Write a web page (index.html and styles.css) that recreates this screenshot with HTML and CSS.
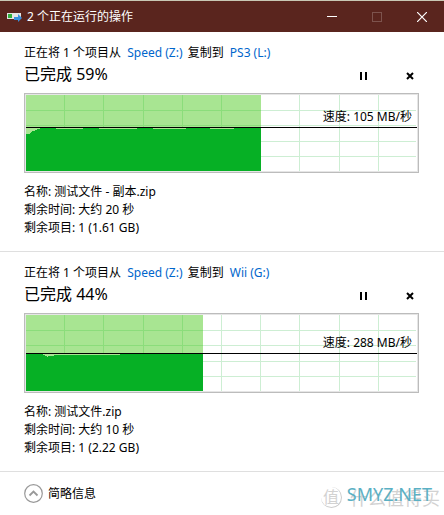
FILE: index.html
```html
<!DOCTYPE html>
<html lang="zh-CN">

<head>
    <meta charset="UTF-8">
    <meta name="viewport" content="width=device-width, initial-scale=1">
    <title>2 个正在运行的操作</title>
    <link rel="stylesheet" href="styles.css">
</head>

<body>
    <header class="titlebar">
        <svg class="app-icon" width="16" height="10" viewBox="0 0 16 10">
            <rect x="0" y="1" width="14" height="6" fill="#e4e4e4" />
            <rect x="1" y="2" width="4" height="4" fill="#2fae3c" />
            <path d="M7 5h4V2l4 4-4 4V8H7z" fill="#3990dd" />
        </svg>
        <h1 class="window-title">2 个正在运行的操作</h1>
        <button class="window-button" type="button" aria-label="最小化">
            <svg width="10" height="10" viewBox="0 0 10 10"><path d="M0 4.500h10" stroke="#fff" /></svg>
        </button>
        <button class="window-button" type="button" aria-label="最大化" disabled>
            <svg width="10" height="10" viewBox="0 0 10 10"><rect x=".5" y=".5" width="9" height="9" fill="none" stroke="#7d534d" /></svg>
        </button>
        <button class="window-button" type="button" aria-label="关闭">
            <svg width="10" height="10" viewBox="0 0 10 10"><path d="M0 0l10 10M10 0L0 10" stroke="#fff" stroke-width="1.200" /></svg>
        </button>
    </header>

    <main>
        <section class="operation">
            <p class="route">正在将 1 个项目从 <a href="#">Speed (Z:)</a> 复制到 <a href="#">PS3 (L:)</a></p>
            <div class="status">
                <h2>已完成 59%</h2>
                <button class="action" type="button" aria-label="暂停">
                    <svg width="8" height="8" viewBox="0 0 8 8"><path d="M0 0h2v8H0zM5 0h2v8H5z" /></svg>
                </button>
                <button class="action" type="button" aria-label="取消">
                    <svg width="8" height="8" viewBox="0 0 8 8"><path d="M1 1l6 6M7 1L1 7" stroke="#000" stroke-width="2" /></svg>
                </button>
            </div>
            <div class="chart">
                <svg class="graph" viewBox="0 0 391 76" preserveAspectRatio="none">
                    <path class="grid" d="M38 0h1v76h-1zM77 0h1v76h-1zM117 0h1v76h-1zM156 0h1v76h-1zM195 0h1v76h-1zM234 0h1v76h-1zM273 0h1v76h-1zM313 0h1v76h-1zM352 0h1v76h-1zM0 15h390v1H0zM0 30h390v1H0zM0 46h390v1H0zM0 61h390v1H0z" />
                    <path class="done" d="M0 0h235v76H0z" />
                    <path class="done-grid" d="M38 0h1v33h-1zM77 0h1v33h-1zM117 0h1v33h-1zM156 0h1v33h-1zM195 0h1v33h-1zM0 15h235v1H0zM0 30h235v1H0z" />
                    <path class="rate" d="M0 39h4v-1h1v-1h1v-1h3v-1h2v-1h3v-1h16v1h27v-1h16v1h38v-1h16v1h33v-1h24v1h24v-1h27v43H0z" />
                    <path class="speed-line" d="M0 32h391v1H0z" />
                </svg>
                <span class="speed speed-upper">速度: 105 MB/秒</span>
            </div>
            <div class="details">
                <p>名称: 测试文件 - 副本.zip</p>
                <p>剩余时间: 大约 20 秒</p>
                <p>剩余项目: 1 (1.61 GB)</p>
            </div>
        </section>

        <section class="operation">
            <p class="route">正在将 1 个项目从 <a href="#">Speed (Z:)</a> 复制到 <a href="#">Wii (G:)</a></p>
            <div class="status">
                <h2>已完成 44%</h2>
                <button class="action" type="button" aria-label="暂停">
                    <svg width="8" height="8" viewBox="0 0 8 8"><path d="M0 0h2v8H0zM5 0h2v8H5z" /></svg>
                </button>
                <button class="action" type="button" aria-label="取消">
                    <svg width="8" height="8" viewBox="0 0 8 8"><path d="M1 1l6 6M7 1L1 7" stroke="#000" stroke-width="2" /></svg>
                </button>
            </div>
            <div class="chart">
                <svg class="graph" viewBox="0 0 391 76" preserveAspectRatio="none">
                    <path class="grid" d="M38 0h1v76h-1zM77 0h1v76h-1zM117 0h1v76h-1zM156 0h1v76h-1zM195 0h1v76h-1zM234 0h1v76h-1zM273 0h1v76h-1zM313 0h1v76h-1zM352 0h1v76h-1zM0 15h390v1H0zM0 30h390v1H0zM0 46h390v1H0zM0 61h390v1H0z" />
                    <path class="done" d="M0 0h177v76H0z" />
                    <path class="done-grid" d="M38 0h1v39h-1zM77 0h1v39h-1zM117 0h1v39h-1zM156 0h1v39h-1zM0 15h177v1H0zM0 30h177v1H0z" />
                    <path class="rate" d="M0 39h17v1h2v1h2v1h1v-1h6v-1h66v-1h83v37H0z" />
                    <path class="speed-line" d="M0 38h391v1H0z" />
                </svg>
                <span class="speed speed-lower">速度: 288 MB/秒</span>
            </div>
            <div class="details">
                <p>名称: 测试文件.zip</p>
                <p>剩余时间: 大约 10 秒</p>
                <p>剩余项目: 1 (2.22 GB)</p>
            </div>
        </section>
    </main>

    <footer class="footer">
        <button class="toggle" type="button">
            <svg width="19" height="19" viewBox="0 0 19 19" fill="none">
                <circle cx="9.500" cy="9.500" r="8.800" stroke="#999" stroke-width="1.200" />
                <path d="M5.500 11.500l4-4 4 4" stroke="#999" stroke-width="1.800" />
            </svg>
            <span>简略信息</span>
        </button>
        <div class="watermark">
            <span class="watermark-logo">值</span>
            <span class="watermark-name">什么值得买</span>
            <span class="watermark-site">SMYZ.NET</span>
        </div>
    </footer>
</body>

</html>
```

FILE: styles.css
```css
body {
    margin: 0;
    background: #fff;
    color: #000;
    font-family: "Noto Sans", "Noto Sans CJK SC", sans-serif;
    font-size: 12px;
    line-height: 18px;
}

p,
h1,
h2 {
    margin: 0;
    font-weight: normal;
}

button {
    border: 0;
    padding: 0;
    background: none;
    color: inherit;
    font: inherit;
}

a {
    margin: 0 2px 0 3px;
    color: #0066cc;
    text-decoration: none;
}

svg {
    display: block;
}

/* Title bar */
.titlebar {
    display: flex;
    align-items: center;
    height: 31px;
    padding-left: 7px;
    border-top: 1px solid #c9c8b4;
    background: #5a251e;
    color: #fff;
}

.window-title {
    flex: 1;
    margin-left: 4px;
    font-size: 12px;
}

.window-button {
    display: flex;
    align-items: center;
    justify-content: center;
    width: 45px;
    height: 30px;
}

/* One copy operation */
.operation {
    padding: 12px 25px 14px 24px;
    border-bottom: 1px solid #dfdfdf;
}

.status {
    display: flex;
    align-items: center;
    height: 24px;
    margin-bottom: 7px;
}

.status h2 {
    flex: 1;
    font-size: 16px;
    line-height: 24px;
}

.action {
    display: flex;
    align-items: center;
    justify-content: center;
    width: 18px;
    height: 24px;
    margin-left: 28px;
    padding-top: 4px;
}

.chart {
    position: relative;
    height: 76px;
    border: 1px solid #bcbcbc;
    padding: 1px;
    background: #e6e6e6;
}

.graph {
    width: 100%;
    height: 76px;
    background: #fff;
    shape-rendering: crispEdges;
}

.grid {
    fill: #cdeed3;
}

.done {
    fill: #a8e592;
}

.done-grid {
    fill: #8bdd7b;
}

.rate {
    fill: #06b025;
}

.speed-line {
    fill: #000;
}

.speed {
    position: absolute;
    right: 6px;
}

.speed-upper {
    top: 14px;
}

.speed-lower {
    top: 20px;
}

.details {
    margin-top: 10px;
}

/* Footer */
.footer {
    display: flex;
    align-items: center;
    justify-content: space-between;
    height: 43px;
    padding: 0 4px 0 24px;
}

.toggle {
    display: flex;
    align-items: center;
    gap: 5px;
}

.watermark {
    position: relative;
    display: flex;
    align-items: center;
    gap: 8px;
    padding-top: 8px;
    color: #d2d2d2;
    font-size: 18px;
    line-height: 22px;
}

.watermark-logo {
    width: 20px;
    height: 20px;
    border-right: 1px solid #ccc;
    border-bottom: 1px solid #ccc;
    border-radius: 50%;
    font-size: 16px;
    line-height: 20px;
    text-align: center;
}

.watermark-site {
    position: absolute;
    top: 4px;
    right: 8px;
    color: #5ab0c4;
    font-size: 18px;
}
```
